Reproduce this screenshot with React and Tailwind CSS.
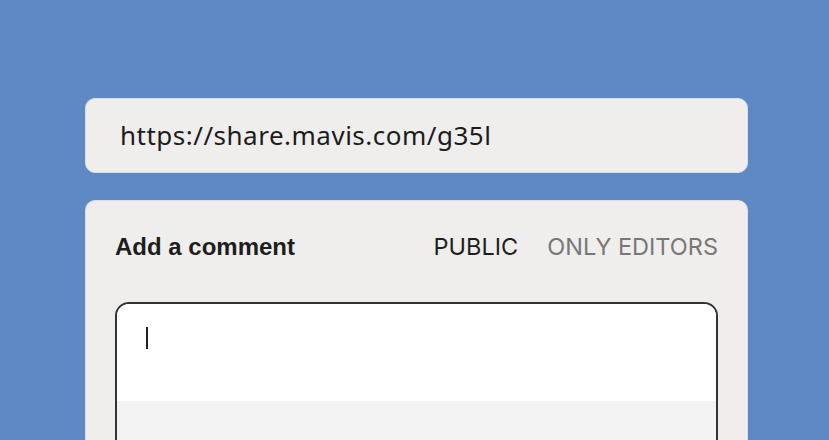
export default function App() {
  return (
    <main className="w-[829px] h-[440px] overflow-hidden bg-[#5f89c5] pl-[85px] pr-[81px] pt-[98px]">
      {/* Share link */}
      <div className="h-[75px] rounded-[10px] bg-[#efeeed] border border-[#d9dde4] flex items-center pl-[34px]">
        <span className="text-[26px] text-[#1c1c1c] tracking-[0.5px] font-['Noto_Sans',sans-serif]">
          https://share.mavis.com/g35l
        </span>
      </div>

      {/* Comment card */}
      <div className="mt-[27px] h-[260px] rounded-[10px] bg-[#efeeed] border border-[#d9dde4] px-[29px] pt-[30px]">
        <div className="flex items-center justify-between h-[32px]">
          <span className="text-[24px] font-bold text-[#1e1e1e] font-['Liberation_Sans',sans-serif]">Add a comment</span>
          <div className="flex gap-[29px] text-[23.5px] font-['Inter',sans-serif]">
            <span className="text-[#1e1e1e]">PUBLIC</span>
            <span className="text-[#777777]">ONLY EDITORS</span>
          </div>
        </div>
        <div className="mt-[39px] h-[160px] rounded-[14px] border-2 border-[#333333] overflow-hidden flex flex-col">
          <div className="h-[97px] bg-white pl-[29px] pt-[23px]">
            <div className="w-[2px] h-[22px] bg-[#222222]"></div>
          </div>
          <div className="flex-1 bg-[#f3f3f3]"></div>
        </div>
      </div>
    </main>
  )
}
